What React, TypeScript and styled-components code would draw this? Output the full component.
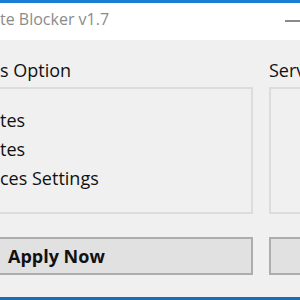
import React from 'react';
import { styled, createGlobalStyle } from 'styled-components';

const GlobalStyle = createGlobalStyle`
    html, body {
        margin: 0;
        padding: 0;
        background: #f0f0f0;
    }
    body {
        font-family: "Open Sans", "Noto Sans", "Liberation Sans", sans-serif;
    }
`;

const options = ['tes', 'tes', 'ces Settings'];

const App: React.FC = () => {
    return (
        <>
            <GlobalStyle />
            <Window>
                <TitleBar>
                    <Title>te Blocker v1.7</Title>
                    <MinimizeButton aria-label="Minimize">
                        <span />
                    </MinimizeButton>
                </TitleBar>

                <Body>
                    <Column>
                        <GroupLabel>s Option</GroupLabel>
                        <GroupBox $side="left">
                            {options.map((text, i) => (
                                <OptionItem key={i}>{text}</OptionItem>
                            ))}
                        </GroupBox>
                        <ActionButton $side="left">Apply Now</ActionButton>
                    </Column>

                    <Column>
                        <GroupLabel>Serv</GroupLabel>
                        <GroupBox $side="right" />
                        <ActionButton $side="right" aria-label="Services" />
                    </Column>
                </Body>

                <BottomAccent />
            </Window>
        </>
    );
};

// --- STYLED COMPONENTS ---
const Window = styled.div`
    width: 300px;
    height: 300px;
    display: flex;
    flex-direction: column;
    overflow: hidden;
    background: #f0f0f0;
    border-top: 3px solid #1a7fd4;
    box-sizing: border-box;
`;

const TitleBar = styled.header`
    height: 37px;
    flex: none;
    background: #ffffff;
    display: flex;
    justify-content: space-between;
    align-items: flex-start;
    padding-top: 5px;
    box-sizing: border-box;
`;

const Title = styled.h1`
    margin: 0;
    font-size: 16px;
    line-height: 22px;
    font-weight: 400;
    color: #8b8b8b;
    white-space: nowrap;
`;

const MinimizeButton = styled.button`
    width: 15px;
    height: 2px;
    margin-top: 12px;
    padding: 0;
    border: none;
    background: transparent;
    span {
        display: block;
        width: 100%;
        height: 2px;
        background: #8a8a8a;
    }
`;

const Body = styled.main`
    flex: 1;
    display: grid;
    grid-template-columns: 253px 160px;
    column-gap: 16px;
    padding-top: 18px;
`;

const Column = styled.section`
    display: flex;
    flex-direction: column;
`;

const GroupLabel = styled.div`
    font-size: 18px;
    line-height: 24px;
    color: #111;
    white-space: nowrap;
    margin-bottom: 5px;
`;

const GroupBox = styled.div<{ $side: 'left' | 'right' }>`
    height: 127px;
    box-sizing: border-box;
    border: 2px solid #dcdcdc;
    ${({ $side }) => ($side === 'left' ? 'border-left: none;' : '')}
    padding-top: 17px;
    display: flex;
    flex-direction: column;
`;

const OptionItem = styled.div`
    font-size: 18px;
    line-height: 29px;
    color: #111;
    white-space: nowrap;
`;

const ActionButton = styled.button<{ $side: 'left' | 'right' }>`
    margin-top: 23px;
    height: 38px;
    box-sizing: border-box;
    border: 2px solid #adadad;
    ${({ $side }) => ($side === 'left' ? 'border-left: none;' : '')}
    background: #e1e1e1;
    font-family: inherit;
    font-size: 18px;
    line-height: 24px;
    font-weight: 700;
    color: #111;
    text-align: left;
    padding: 0 0 0 8px;
`;

const BottomAccent = styled.div`
    height: 3px;
    flex: none;
    background: #1a6fb3;
`;

export default App;
